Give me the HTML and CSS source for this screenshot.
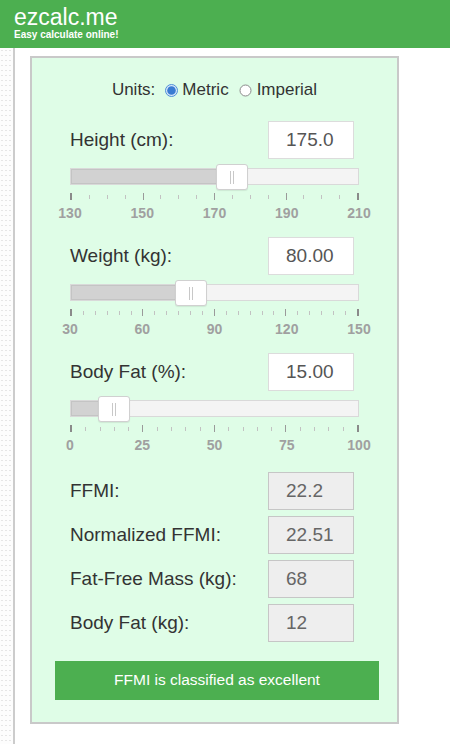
FILE: index.html
```html
<!DOCTYPE html>
<html lang="en">
<head>
<meta charset="utf-8">
<title>FFMI Calculator - ezcalc.me</title>
<link rel="stylesheet" href="styles.css">
</head>
<body>
<header class="topbar">
  <div class="logo">ezcalc.me</div>
  <div class="tagline">Easy calculate online!</div>
</header>
<div class="page">
  <div class="gutter"></div>
  <main class="card">
    <div class="units">
      <span class="units-label">Units:</span>
      <svg class="radio radio-on" width="13" height="13" viewBox="0 0 13 13"><circle cx="6.5" cy="6.5" r="6" fill="#d6e6f8" stroke="#4f8fd8" stroke-width="1"/><circle cx="6.5" cy="6.5" r="4.3" fill="#3a7bd2"/></svg>
      <span class="opt">Metric</span>
      <svg class="radio radio-off" width="13" height="13" viewBox="0 0 13 13"><circle cx="6.5" cy="6.5" r="5.5" fill="#fff" stroke="#8a8a8a" stroke-width="1"/></svg>
      <span class="opt">Imperial</span>
    </div>

    <section class="field">
      <div class="row">
        <label class="lbl">Height (cm):</label>
        <div class="inbox">175.0</div>
      </div>
      <div class="track">
        <div class="fill" style="width:56.25%"></div>
        <div class="handle" style="left:56.25%"><i></i><i></i></div>
      </div>
      <div class="ticks">
        <i class="t major end"></i><i class="t"></i><i class="t"></i><i class="t"></i>
        <i class="t major"></i><i class="t"></i><i class="t"></i><i class="t"></i>
        <i class="t major"></i><i class="t"></i><i class="t"></i><i class="t"></i>
        <i class="t major"></i><i class="t"></i><i class="t"></i><i class="t"></i>
        <i class="t major end"></i>
      </div>
      <div class="scale"><span>130</span><span>150</span><span>170</span><span>190</span><span>210</span></div>
    </section>

    <section class="field">
      <div class="row">
        <label class="lbl">Weight (kg):</label>
        <div class="inbox">80.00</div>
      </div>
      <div class="track">
        <div class="fill" style="width:41.667%"></div>
        <div class="handle" style="left:41.667%"><i></i><i></i></div>
      </div>
      <div class="ticks">
        <i class="t major end"></i><i class="t"></i><i class="t"></i><i class="t"></i><i class="t"></i><i class="t"></i>
        <i class="t major"></i><i class="t"></i><i class="t"></i><i class="t"></i><i class="t"></i><i class="t"></i>
        <i class="t major"></i><i class="t"></i><i class="t"></i><i class="t"></i><i class="t"></i><i class="t"></i>
        <i class="t major"></i><i class="t"></i><i class="t"></i><i class="t"></i><i class="t"></i><i class="t"></i>
        <i class="t major end"></i>
      </div>
      <div class="scale"><span>30</span><span>60</span><span>90</span><span>120</span><span>150</span></div>
    </section>

    <section class="field">
      <div class="row">
        <label class="lbl">Body Fat (%):</label>
        <div class="inbox">15.00</div>
      </div>
      <div class="track">
        <div class="fill" style="width:15%"></div>
        <div class="handle" style="left:15%"><i></i><i></i></div>
      </div>
      <div class="ticks">
        <i class="t major end"></i><i class="t"></i><i class="t"></i><i class="t"></i><i class="t"></i>
        <i class="t major"></i><i class="t"></i><i class="t"></i><i class="t"></i><i class="t"></i>
        <i class="t major"></i><i class="t"></i><i class="t"></i><i class="t"></i><i class="t"></i>
        <i class="t major"></i><i class="t"></i><i class="t"></i><i class="t"></i><i class="t"></i>
        <i class="t major end"></i>
      </div>
      <div class="scale"><span>0</span><span>25</span><span>50</span><span>75</span><span>100</span></div>
    </section>

    <section class="results">
      <div class="row"><span class="lbl">FFMI:</span><div class="outbox">22.2</div></div>
      <div class="row"><span class="lbl">Normalized FFMI:</span><div class="outbox">22.51</div></div>
      <div class="row"><span class="lbl">Fat-Free Mass (kg):</span><div class="outbox">68</div></div>
      <div class="row"><span class="lbl">Body Fat (kg):</span><div class="outbox">12</div></div>
    </section>

    <div class="verdict">FFMI is classified as excellent</div>
  </main>
</div>
</body>
</html>
```
FILE: styles.css
```css
* { box-sizing: border-box; }

html, body {
  margin: 0;
  padding: 0;
  background: #ffffff;
  font-family: "Liberation Sans", Arial, sans-serif;
}

body {
  min-height: 100vh;
  display: flex;
  flex-direction: column;
}

.topbar {
  height: 48px;
  background: #4caf50;
  color: #ffffff;
  padding: 5.5px 0 0 14px;
}

.logo {
  font-size: 23px;
  line-height: 23px;
}

.tagline {
  margin-top: 1px;
  font-size: 10px;
  line-height: 10px;
  font-weight: bold;
}

.page {
  flex: 1;
  display: flex;
  align-items: flex-start;
}

.gutter {
  width: 15px;
  align-self: stretch;
  border-right: 2px solid #cccccc;
  background-color: #fdfdfd;
  background-image: radial-gradient(circle, #e6e6e6 0.6px, transparent 0.9px);
  background-size: 4px 5px;
}

.card {
  margin: 8px 0 0 15px;
  width: 369px;
  border: 2px solid #c9c9c9;
  background: #dffde7;
  padding: 22px 38px 22px 38px;
  color: #333333;
}

.units {
  display: flex;
  align-items: center;
  justify-content: center;
  height: 20px;
  font-size: 17px;
  line-height: 20px;
  color: #333333;
}

.units-label { margin-right: 10px; }
.radio { flex: none; display: block; }
.radio-on { margin-right: 4px; }
.radio-off { margin-left: 10px; margin-right: 5px; }

.field { margin-top: 21px; }
.field + .field { margin-top: 17px; }

.row {
  display: flex;
  justify-content: space-between;
  align-items: center;
  height: 38px;
  padding-right: 5px;
}

.lbl {
  font-size: 19px;
  color: #333333;
}

.inbox, .outbox {
  width: 86px;
  height: 38px;
  padding-left: 17px;
  font-size: 19px;
  line-height: 36px;
}

.inbox {
  background: #ffffff;
  border: 1px solid #dcdcdc;
  color: #555555;
}

.outbox {
  background: #eeeeee;
  border: 1px solid #c6c6c6;
  color: #666666;
}

.track {
  position: relative;
  margin-top: 9px;
  height: 17px;
  border: 1px solid #d9d9d9;
  background: #f4f4f4;
}

.fill {
  height: 100%;
  background: #d2d2d2;
  box-shadow: inset 0 0 0 1px #c4c4c4;
}

.handle {
  position: absolute;
  top: -5px;
  width: 32px;
  height: 26px;
  margin-left: -16px;
  background: #ffffff;
  border: 1px solid #d0d0d0;
  border-radius: 3px;
  box-shadow: 0 1px 1px rgba(0, 0, 0, 0.08);
  display: flex;
  justify-content: center;
  align-items: center;
  gap: 2px;
}

.handle i {
  display: block;
  width: 1px;
  height: 13px;
  background: #c8c8c8;
}

.ticks {
  display: flex;
  justify-content: space-between;
  align-items: flex-start;
  height: 7px;
  margin-top: 8px;
}

.t {
  display: block;
  width: 1px;
  height: 4px;
  margin-top: 2px;
  background: #c2c2c2;
}

.t.major {
  height: 7px;
  margin-top: 0;
  background: #9a9a9a;
}

.t.end {
  width: 2px;
  background: #8a8a8a;
}

.scale {
  display: flex;
  justify-content: space-between;
  margin-top: 6px;
  height: 14px;
  font-size: 14px;
  line-height: 14px;
  font-weight: bold;
  color: #a0a0a0;
}

.scale span {
  width: 0;
  display: flex;
  justify-content: center;
  white-space: nowrap;
}

.results {
  margin-top: 20px;
  display: flex;
  flex-direction: column;
  gap: 6px;
}

.verdict {
  margin: 19px 0 0 -15px;
  width: 324px;
  height: 39px;
  background: #4caf50;
  color: #ffffff;
  font-size: 15.5px;
  line-height: 38px;
  text-align: center;
}
```
